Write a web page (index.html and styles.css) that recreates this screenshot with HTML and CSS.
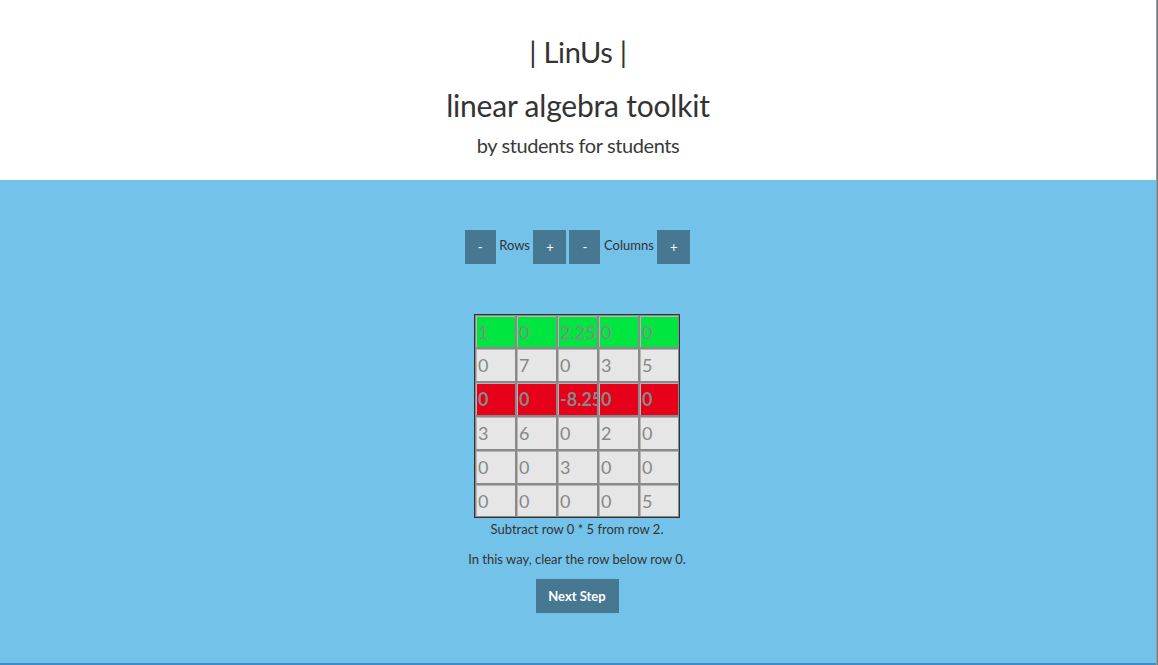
FILE: index.html
```html
<!DOCTYPE html>
<html>
<head>
<meta charset="utf-8">
<link rel="stylesheet" href="styles.css">
</head>
<body>
<div class="page">
  <header class="hero">
    <h1 class="title">| LinUs |</h1>
    <h2 class="subtitle">linear algebra toolkit</h2>
    <p class="tagline">by students for students</p>
  </header>
  <main class="work">
    <div class="controls">
      <button class="btn small">-</button>
      <span class="label">Rows</span>
      <button class="btn small plus">+</button>
      <button class="btn small">-</button>
      <span class="label">Columns</span>
      <button class="btn small plus">+</button>
    </div>
    <div class="matrix">
      <div class="row green">
        <input class="cell" value="1"><input class="cell" value="0"><input class="cell" value="2.25"><input class="cell" value="0"><input class="cell" value="0">
      </div>
      <div class="row">
        <input class="cell" value="0"><input class="cell" value="7"><input class="cell" value="0"><input class="cell" value="3"><input class="cell" value="5">
      </div>
      <div class="row red">
        <input class="cell" value="0"><input class="cell" value="0"><input class="cell" value="-8.25"><input class="cell" value="0"><input class="cell" value="0">
      </div>
      <div class="row">
        <input class="cell" value="3"><input class="cell" value="6"><input class="cell" value="0"><input class="cell" value="2"><input class="cell" value="0">
      </div>
      <div class="row">
        <input class="cell" value="0"><input class="cell" value="0"><input class="cell" value="3"><input class="cell" value="0"><input class="cell" value="0">
      </div>
      <div class="row">
        <input class="cell" value="0"><input class="cell" value="0"><input class="cell" value="0"><input class="cell" value="0"><input class="cell" value="5">
      </div>
    </div>
    <p class="step">Subtract row 0 * 5 from row 2.</p>
    <p class="step second">In this way, clear the row below row 0.</p>
    <button class="btn next">Next Step</button>
  </main>
</div>
<div class="edge"></div>
</body>
</html>
```

FILE: styles.css
```css
* { box-sizing: border-box; }
html, body { margin: 0; padding: 0; height: 100%; }
body {
  display: flex;
  font-family: "Lato", "Open Sans", sans-serif;
  color: #333;
  background: #73c2e9;
  overflow: hidden;
}
.page {
  width: 1156px;
  height: 665px;
  display: flex;
  flex-direction: column;
  border-bottom: 2px solid #3f8dc4;
}
.edge {
  width: 2px;
  height: 665px;
  background: linear-gradient(to right, #9a9a9a 50%, #6f7f86 50%);
}
.hero {
  height: 180px;
  background: #fff;
  display: flex;
  flex-direction: column;
  align-items: center;
  padding-top: 34px;
}
.title {
  margin: 0;
  font-size: 29px;
  font-weight: 400;
  line-height: 36px;
  letter-spacing: -0.3px;
}
.subtitle {
  margin: 17px 0 0;
  font-size: 30px;
  font-weight: 400;
  line-height: 36px;
  letter-spacing: -0.2px;
}
.tagline {
  margin: 9px 0 0;
  font-size: 20px;
  font-weight: 400;
  line-height: 26px;
  letter-spacing: -0.4px;
  color: #3a3a3a;
}
.work {
  flex: 1;
  background: #73c2e9;
  display: flex;
  flex-direction: column;
  align-items: center;
  padding-top: 50px;
}
.controls {
  display: flex;
  align-items: flex-start;
  gap: 3px;
  height: 34px;
  margin-right: 1px;
}
.btn {
  border: none;
  background: #467891;
  color: #fff;
  font-family: inherit;
  font-size: 13px;
  padding: 0;
  height: 34px;
}
.btn.small { width: 31px; }
.btn.small.plus { width: 33px; }
.label {
  font-size: 13px;
  line-height: 30px;
  padding: 0 0.5px;
}
.matrix {
  margin-top: 50px;
  margin-right: 2px;
  border: 1px solid #333;
  display: flex;
  flex-direction: column;
  width: 206px;
}
.row {
  display: flex;
  background: #e6e6e6;
}
.row.green { background: #00e640; }
.row.red { background: #e6001a; }
.cell {
  width: 41px;
  height: 34px;
  border: 1px solid #8a8a8a;
  box-shadow: inset 1px 1px 0 #b5b5b5;
  background: transparent;
  color: #888;
  font-family: inherit;
  font-size: 18px;
  padding: 0 0 0 2px;
  margin: 0;
  outline: none;
}
.row .cell:last-child { width: 40px; }
.row:first-child .cell,
.row:last-child .cell { height: 33px; }
.red .cell { font-weight: 700; }
.step {
  margin: 2px 2px 0 0;
  font-size: 13px;
  line-height: 18px;
}
.step.second { margin-top: 12px; }
.next {
  margin: 11px 2px 0 0;
  width: 83px;
  font-weight: 700;
}
```
